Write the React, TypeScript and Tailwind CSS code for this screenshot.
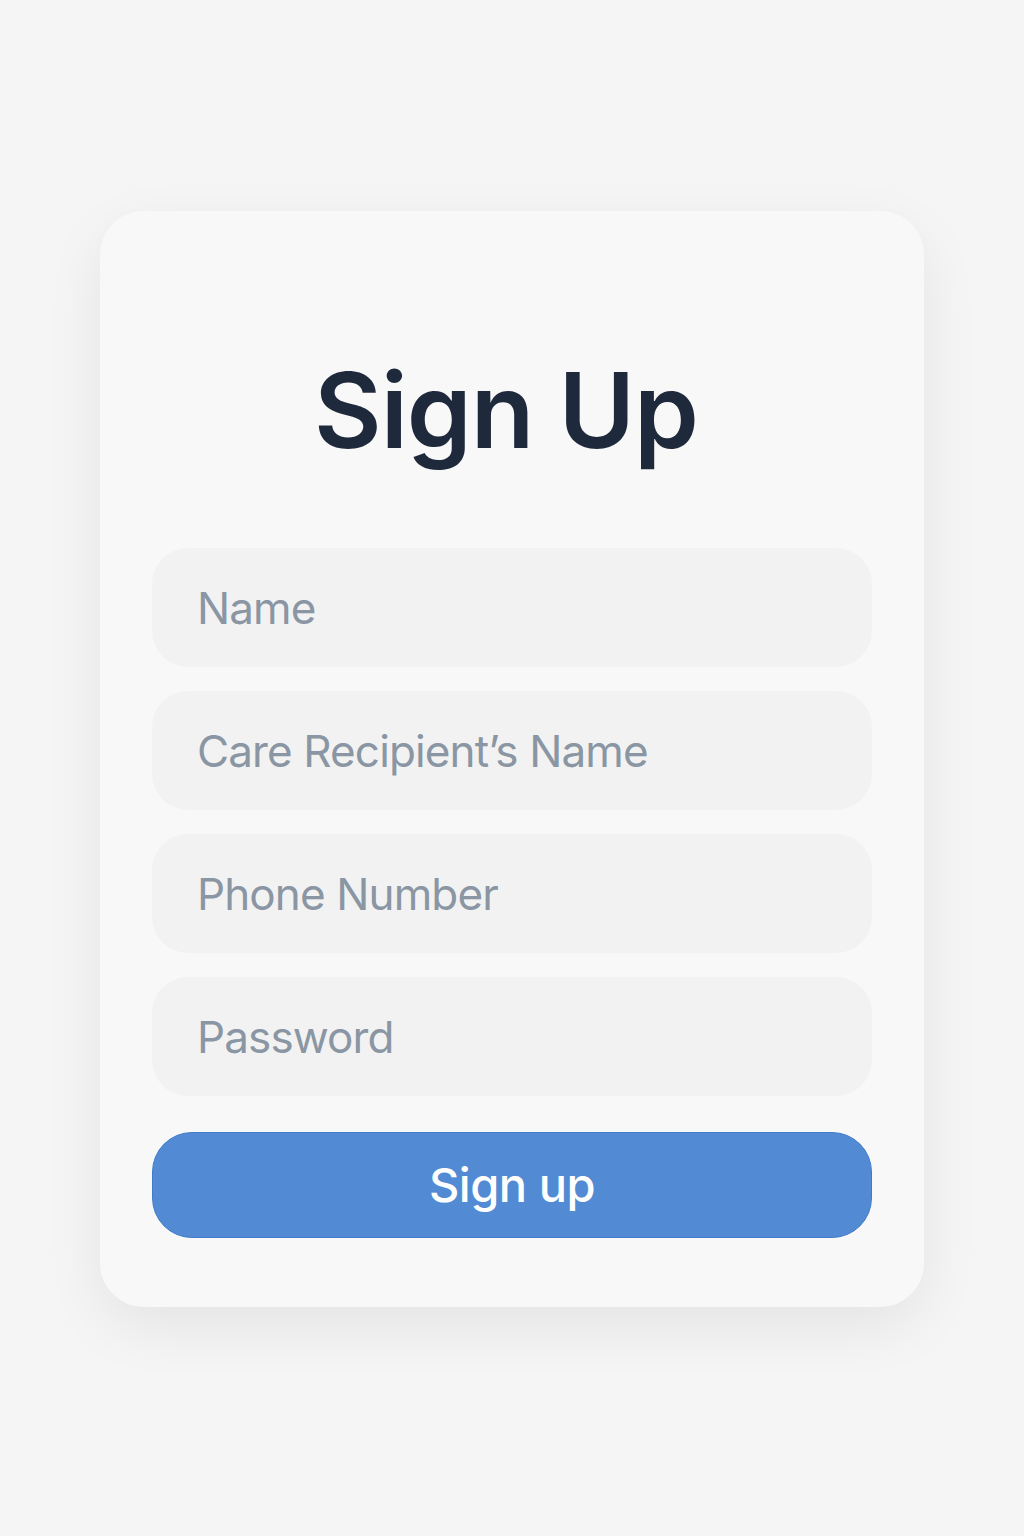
import { useState } from 'react';

const FIELDS = [
  { name: 'name', placeholder: 'Name', type: 'text' },
  { name: 'recipient', placeholder: 'Care Recipient’s Name', type: 'text' },
  { name: 'phone', placeholder: 'Phone Number', type: 'tel' },
  { name: 'password', placeholder: 'Password', type: 'password' },
];

export default function App() {
  const [values, setValues] = useState<Record<string, string>>({});

  return (
    <div className="min-h-[1536px] w-full bg-[#f5f5f5] pt-[211px] font-['Inter','Noto_Sans',sans-serif]">
      <div className="mx-auto w-[824px] rounded-[44px] bg-[#f8f8f8] px-[52px] pt-[147px] pb-[69px] shadow-[0_20px_60px_rgba(0,0,0,0.07)]">
        <h1 className="pr-[12px] text-center text-[104px] leading-none font-semibold tracking-[-0.01em] text-[#1e2a3b]">Sign Up</h1>

        <form className="mt-[86px] flex flex-col gap-6" onSubmit={(e) => e.preventDefault()}>
          {FIELDS.map((f) => (
            <input
              key={f.name}
              type={f.type}
              placeholder={f.placeholder}
              value={values[f.name] ?? ''}
              onChange={(e) => setValues({ ...values, [f.name]: e.target.value })}
              className="h-[119px] w-full rounded-[36px] bg-[#f2f2f2] px-[45px] text-[44px] tracking-[-0.02em] text-[#1e2a3b] outline-none placeholder:text-[#8a96a3]"
            />
          ))}

          <button
            type="submit"
            className="mt-3 h-[106px] w-full rounded-[40px] border border-[#3f7bc9] bg-[#528bd3] text-[47px] font-medium tracking-[-0.01em] text-white"
          >
            Sign up
          </button>
        </form>
      </div>
    </div>
  );
}
